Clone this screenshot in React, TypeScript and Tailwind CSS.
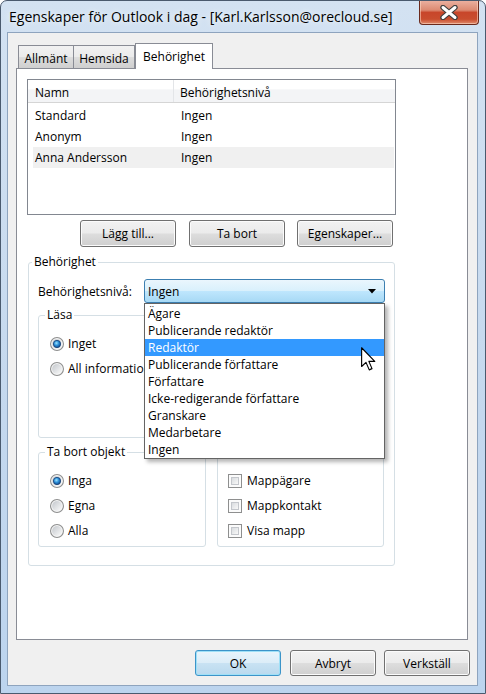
import React from 'react';

const ui = "font-['Open_Sans',sans-serif] text-[12px] text-black";

function Radio({ checked }: { checked?: boolean }) {
  return (
    <svg width="14" height="14" viewBox="0 0 13 13" className="shrink-0">
      <defs>
        <linearGradient id="rbg" x1="0" y1="0" x2="1" y2="1">
          <stop offset="0" stopColor="#c3c7cc" />
          <stop offset="1" stopColor="#fbfbfb" />
        </linearGradient>
        <radialGradient id="rdot" cx="0.42" cy="0.38" r="0.7">
          <stop offset="0" stopColor="#9ce4ff" />
          <stop offset="0.45" stopColor="#2c8fd8" />
          <stop offset="1" stopColor="#0b3b7c" />
        </radialGradient>
      </defs>
      <circle cx="6.5" cy="6.5" r="6" fill="#f6f6f6" stroke="#8e8f8f" />
      <circle cx="6.5" cy="6.5" r="4.6" fill="url(#rbg)" />
      {checked && <circle cx="6.5" cy="6.5" r="3.4" fill="url(#rdot)" stroke="#143e73" strokeWidth="0.7" />}
    </svg>
  );
}

function Check() {
  return (
    <span className="shrink-0 w-[14px] h-[14px] border border-[#8e8f8f] bg-[#fbfbfb] p-[2px]">
      <span className="block w-full h-full border border-[#c4c7cc] bg-[linear-gradient(135deg,#d9dcdf,#f9f9f9)]" />
    </span>
  );
}

function WinButton({ label, w, h, primary }: { label: string; w: string; h: string; primary?: boolean }) {
  const skin = primary
    ? 'border-[#3c94c9] bg-[linear-gradient(to_bottom,#eaf5fc_0%,#dcedf8_48%,#c8e2f3_52%,#b9d9ee_100%)] shadow-[inset_0_0_0_1px_#9fe0f7]'
    : 'border-[#707070] bg-[linear-gradient(to_bottom,#f2f2f2_0%,#ebebeb_48%,#dddddd_52%,#cfcfcf_100%)] shadow-[inset_0_0_0_1px_#fbfbfb]';
  return (
    <div className={`${w} ${h} ${skin} border rounded-[3px] flex items-center justify-center pt-[1px]`}>
      {label}
    </div>
  );
}

function Tab({ label, w, active, first }: { label: string; w: string; active?: boolean; first?: boolean }) {
  if (active) {
    return (
      <div className={`${w} h-[26px] -mb-px relative z-10 bg-white border border-b-0 border-[#898c95] flex items-start justify-center pt-[4px]`}>
        {label}
      </div>
    );
  }
  return (
    <div
      className={`${w} h-[23px] border-t border-r border-[#898c95] ${first ? 'border-l' : ''} bg-[linear-gradient(to_bottom,#f2f2f2_0%,#ebebeb_48%,#dddddd_52%,#cfcfcf_100%)] flex items-start justify-center pt-[4px]`}
    >
      {label}
    </div>
  );
}

const items = [
  'Ägare',
  'Publicerande redaktör',
  'Redaktör',
  'Publicerande författare',
  'Författare',
  'Icke-redigerande författare',
  'Granskare',
  'Medarbetare',
  'Ingen',
];

const rows = [
  { name: 'Standard', level: 'Ingen' },
  { name: 'Anonym', level: 'Ingen' },
  { name: 'Anna Andersson', level: 'Ingen', sel: true },
];

export default function App() {
  return (
    <div className={`${ui} w-[486px] h-[694px] border border-[#4a5a6e] rounded-t-[7px] bg-[linear-gradient(to_bottom,#d3e2f2_0%,#c4d8ee_60%,#bcd4ee_100%)] flex flex-col overflow-hidden`}>
      {/* title bar */}
      <div className="h-[31px] shrink-0 flex items-start justify-between">
        <div className="pl-[8px] pt-[6px] text-[14px] leading-[20px] whitespace-nowrap [text-shadow:0_0_6px_#ffffff]">
          Egenskaper för Outlook i dag - [Karl.Karlsson@orecloud.se]
        </div>
        <div className="-mt-px mr-[6px] shrink-0 w-[60px] h-[25px] rounded-b-[4px] border border-t-0 border-[#6b2a1d] bg-[linear-gradient(to_bottom,#ecb3a3_0%,#dc8a72_42%,#c8462a_52%,#c94d2e_80%,#e08c6f_100%)] shadow-[inset_0_0_0_1px_rgba(255,220,200,0.55)] flex items-center justify-center">
          <svg width="20" height="15" viewBox="0 0 20 15">
            <path d="M4 2.5 L16 12.5 M16 2.5 L4 12.5" stroke="#404040" strokeWidth="5.4" strokeLinecap="round" />
            <path d="M4 2.5 L16 12.5 M16 2.5 L4 12.5" stroke="#ffffff" strokeWidth="3" strokeLinecap="round" />
          </svg>
        </div>
      </div>

      {/* client area */}
      <div className="ml-[6px] w-[471px] h-[654px] shrink-0 border border-[#8ea4be] bg-[#f0f0f0] flex flex-col">
        {/* tabs */}
        <div className="mt-[10px] ml-[10px] h-[25px] flex items-end">
          <Tab label="Allmänt" w="w-[56px]" first />
          <Tab label="Hemsida" w="w-[61px]" />
          <Tab label="Behörighet" w="w-[78px]" active />
        </div>

        {/* tab panel */}
        <div className="ml-[8px] w-[452px] h-[572px] border border-[#898c95] bg-white pl-[10px] pt-[10px]">
          {/* list view */}
          <div className="w-[369px] h-[136px] border border-[#828790] bg-white">
            <div className="h-[23px] flex border-b border-[#d5d5d5] bg-[linear-gradient(to_bottom,#ffffff_0%,#ffffff_40%,#f3f4f6_45%,#f3f4f6_100%)]">
              <div className="w-[146px] border-r border-[#e3e5e8] pl-[7px] pt-[3px] flex items-center">Namn</div>
              <div className="pl-[6px] pt-[3px] flex items-center">Behörighetsnivå</div>
            </div>
            <div className="pt-[2px]">
              {rows.map((r) => (
                <div key={r.name} className={`h-[21px] ml-[5px] mr-[1px] flex items-center pt-[1px] ${r.sel ? 'bg-[#f0f0f0]' : ''}`}>
                  <div className="w-[148px] pl-[2px]">{r.name}</div>
                  <div>{r.level}</div>
                </div>
              ))}
            </div>
          </div>

          {/* list buttons */}
          <div className="mt-[5px] flex">
            <div className="ml-[53px]">
              <WinButton label="Lägg till..." w="w-[96px]" h="h-[27px]" />
            </div>
            <div className="ml-[13px]">
              <WinButton label="Ta bort" w="w-[96px]" h="h-[27px]" />
            </div>
            <div className="ml-[12px]">
              <WinButton label="Egenskaper..." w="w-[96px]" h="h-[27px]" />
            </div>
          </div>

          {/* Behörighet group */}
          <fieldset className="mt-[7px] ml-[1px] w-[367px] border border-[#d5dfe5] rounded-[3px]">
            <legend className="ml-[3px] px-[2px] leading-[16px]">Behörighet</legend>
            <div className="h-[286px]">
              <div className="mt-[9px] ml-[9px] flex items-center">
                <div className="w-[106px] pt-[1px]">Behörighetsnivå:</div>
                <div className="relative z-20">
                  <div className="w-[241px] h-[24px] border border-[#3c7fb1] rounded-[3px] bg-[linear-gradient(to_bottom,#eaf6fd_0%,#d9f0fc_48%,#bee6fd_52%,#a7d9f5_100%)] flex items-center justify-between pl-[3px] pr-[8px]">
                    <span className="pt-[1px]">Ingen</span>
                    <svg width="8" height="5" viewBox="0 0 8 5">
                      <path d="M0 0 H8 L4 4.5 Z" fill="#000" />
                    </svg>
                  </div>
                  {/* open dropdown list */}
                  <div className="absolute top-full left-0 w-[241px] border border-[#646464] bg-white pt-[1px] shadow-[3px_3px_4px_rgba(0,0,0,0.3)]">
                    {items.map((it) => (
                      <div
                        key={it}
                        className={`h-[17px] leading-[17px] pl-[3px] ${it === 'Redaktör' ? 'bg-[#3399ff] text-white' : ''}`}
                      >
                        {it}
                      </div>
                    ))}
                    <svg width="15" height="24" viewBox="0 0 12 19" className="absolute left-[216px] top-[43px]">
                      <path d="M0.5 0.5 V15.5 L4 12.2 L6.6 18.2 L8.8 17.2 L6.3 11.4 H11 Z" fill="#fff" stroke="#000" strokeWidth="0.9" strokeLinejoin="round" />
                    </svg>
                  </div>
                </div>
              </div>

              <div className="mt-[4px] ml-[9px] grid grid-cols-[168px_167px] gap-x-[11px] gap-y-[6px]">
                <fieldset className="border border-[#d5dfe5] rounded-[3px]">
                  <legend className="ml-[6px] px-[2px] leading-[16px]">Läsa</legend>
                  <div className="h-[114px] pt-[8px] pl-[11px]">
                    <div className="h-[25px] flex items-center gap-[4px]">
                      <Radio checked />
                      <span>Inget</span>
                    </div>
                    <div className="h-[25px] flex items-center gap-[4px]">
                      <Radio />
                      <span>All information</span>
                    </div>
                  </div>
                </fieldset>
                <fieldset className="border border-[#d5dfe5] rounded-[3px]">
                  <legend className="ml-[6px] px-[2px] leading-[16px]">Skriva</legend>
                  <div className="h-[114px] pt-[8px] pl-[10px]">
                    {[0, 1, 2, 3].map((c) => (
                      <div key={c} className="h-[25px] flex items-center">
                        <Check />
                      </div>
                    ))}
                  </div>
                </fieldset>
                <fieldset className="border border-[#d5dfe5] rounded-[3px]">
                  <legend className="ml-[6px] px-[2px] leading-[16px]">Ta bort objekt</legend>
                  <div className="h-[86px] pt-[8px] pl-[11px]">
                    {[
                      { l: 'Inga', c: true },
                      { l: 'Egna', c: false },
                      { l: 'Alla', c: false },
                    ].map((r) => (
                      <div key={r.l} className="h-[25px] flex items-center gap-[4px]">
                        <Radio checked={r.c} />
                        <span>{r.l}</span>
                      </div>
                    ))}
                  </div>
                </fieldset>
                <fieldset className="border border-[#d5dfe5] rounded-[3px]">
                  <legend className="ml-[6px] px-[2px] leading-[16px]">Övrigt</legend>
                  <div className="h-[86px] pt-[8px] pl-[10px]">
                    {['Mappägare', 'Mappkontakt', 'Visa mapp'].map((c) => (
                      <div key={c} className="h-[25px] flex items-center gap-[5px]">
                        <Check />
                        <span>{c}</span>
                      </div>
                    ))}
                  </div>
                </fieldset>
              </div>
            </div>
          </fieldset>
        </div>

        {/* dialog buttons */}
        <div className="mt-[10px] mr-[7px] flex justify-end gap-[8px]">
          <div className="mr-[1px]">
            <WinButton label="OK" w="w-[86px]" h="h-[26px]" primary />
          </div>
          <WinButton label="Avbryt" w="w-[86px]" h="h-[26px]" />
          <WinButton label="Verkställ" w="w-[86px]" h="h-[26px]" />
        </div>
      </div>
    </div>
  );
}
